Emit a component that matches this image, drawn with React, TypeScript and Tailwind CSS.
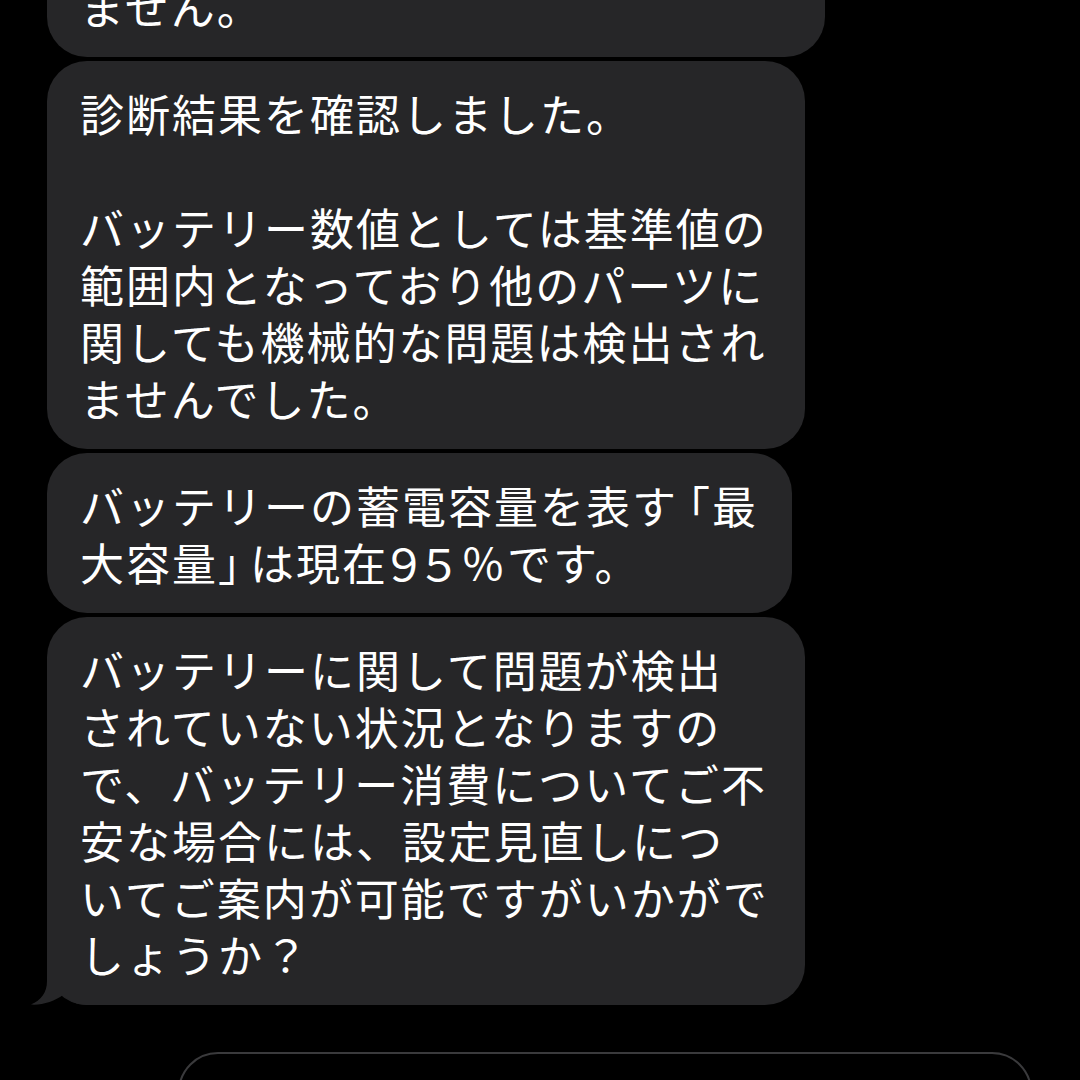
import { ReactNode } from 'react';

const Lines = ({ lines }: { lines: ReactNode[] }) => (
  <>
    {lines.map((line, i) => (
      <div key={i} className="h-[57px] whitespace-nowrap">
        {line}
      </div>
    ))}
  </>
);

const Tail = () => (
  <svg
    className="absolute left-[-20px] bottom-0"
    width="60"
    height="40"
    viewBox="0 0 60 40"
  >
    <path
      d="M20,0 L20,16 C20,28 14,35 4,39.6 C15,40.5 28,36 36,30 C42,36 50,40 60,40 L60,0 Z"
      fill="#262628"
    />
  </svg>
);

const Bubble = ({
  lines,
  width,
  className = '',
  tail = false,
}: {
  lines: ReactNode[];
  width: string;
  className?: string;
  tail?: boolean;
}) => (
  <div className={`relative ${width} ${className} rounded-[40px] bg-[#262628] pl-[33px] pt-[24px] pb-[22px]`}>
    <Lines lines={lines} />
    {tail && <Tail />}
  </div>
);

const App = () => {
  return (
    <div
      className="w-[1080px] h-[1080px] overflow-hidden bg-black text-white text-[44px] leading-[57px] tracking-[2px]"
      style={{ fontFamily: '"Noto Sans CJK JP", "Noto Sans", sans-serif' }}>
      <div className="flex flex-col gap-[4px] pl-[47px]">
        <Bubble lines={['ません。']} width="w-[778px]" className="mt-[-46px]" />
        <Bubble
          width="w-[758px]"
          lines={[
            '診断結果を確認しました。',
            '',
            'バッテリー数値としては基準値の',
            '範囲内となっており他のパーツに',
            '関しても機械的な問題は検出され',
            'ませんでした。',
          ]}
        />
        <Bubble
          width="w-[745px]"
          lines={[
            <>
              バッテリーの蓄電容量を表す<span className="ml-[-12px]">「</span>最
            </>,
            <>
              大容量<span className="mr-[-14px]">」</span>は現在
              <span className="ml-[-6px] tracking-[-9px]">９５</span>
              <span className="ml-[9px]">％</span>です。
            </>,
          ]}
        />
        <Bubble
          width="w-[758px]"
          tail
          lines={[
            'バッテリーに関して問題が検出',
            'されていない状況となりますの',
            'で、バッテリー消費についてご不',
            '安な場合には、設定見直しにつ',
            'いてご案内が可能ですがいかがで',
            'しょうか？',
          ]}
        />
      </div>
      <div className="ml-[178px] mt-[47px] w-[854px] h-[80px] rounded-[46px] border-2 border-[#3a3a3c]" />
    </div>
  );
};

export default App;
